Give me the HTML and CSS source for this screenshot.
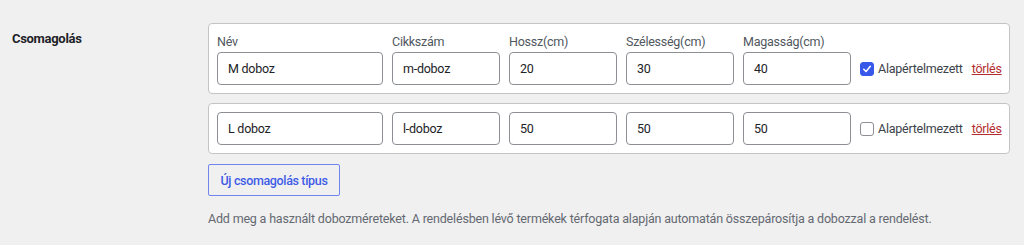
FILE: index.html
```html
<!DOCTYPE html>
<html lang="hu">
<head>
<meta charset="utf-8">
<title>Csomagolás</title>
<link rel="stylesheet" href="styles.css">
</head>
<body>
<div class="form-row">
  <div class="row-label">Csomagolás</div>
  <div class="row-field">
    <div class="pack">
      <div class="cell cell-name">
        <label class="cell-label">Név</label>
        <input class="inp" type="text" value="M doboz">
      </div>
      <div class="cell">
        <label class="cell-label">Cikkszám</label>
        <input class="inp" type="text" value="m-doboz">
      </div>
      <div class="cell">
        <label class="cell-label">Hossz(cm)</label>
        <input class="inp" type="text" value="20">
      </div>
      <div class="cell">
        <label class="cell-label">Szélesség(cm)</label>
        <input class="inp" type="text" value="30">
      </div>
      <div class="cell">
        <label class="cell-label">Magasság(cm)</label>
        <input class="inp" type="text" value="40">
      </div>
      <div class="extra">
        <span class="check check-on"><svg viewBox="0 0 14 14" width="14" height="14"><path d="M3.2 7.3 L5.9 10 L10.9 3.8" fill="none" stroke="#fff" stroke-width="1.8" stroke-linecap="round" stroke-linejoin="round"/></svg></span>
        <span class="check-text">Alapértelmezett</span>
        <a class="del" href="#">törlés</a>
      </div>
    </div>
    <div class="pack">
      <div class="cell cell-name"><input class="inp" type="text" value="L doboz"></div>
      <div class="cell"><input class="inp" type="text" value="l-doboz"></div>
      <div class="cell"><input class="inp" type="text" value="50"></div>
      <div class="cell"><input class="inp" type="text" value="50"></div>
      <div class="cell"><input class="inp" type="text" value="50"></div>
      <div class="extra">
        <span class="check"></span>
        <span class="check-text">Alapértelmezett</span>
        <a class="del" href="#">törlés</a>
      </div>
    </div>
    <button class="btn" type="button">Új csomagolás típus</button>
    <p class="desc">Add meg a használt dobozméreteket. A rendelésben lévő termékek térfogata alapján automatán összepárosítja a dobozzal a rendelést.</p>
  </div>
</div>
</body>
</html>
```
FILE: styles.css
```css
* { box-sizing: border-box; }
html, body { margin: 0; padding: 0; }
body {
  background: #f0f0f1;
  font-family: "Roboto", "Noto Sans", sans-serif;
  font-size: 12.5px;
  letter-spacing: -0.25px;
  color: #1d2327;
  width: 1024px;
  height: 245px;
  overflow: hidden;
}
.form-row {
  display: flex;
  padding: 23px 0 0 12px;
}
.row-label {
  width: 196px;
  flex: none;
  font-size: 13px;
  font-weight: 700;
  letter-spacing: -0.3px;
  line-height: 20px;
  padding-top: 6px;
  color: #1d2327;
}
.row-field {
  width: 802px;
  flex: none;
  display: flex;
  flex-direction: column;
  align-items: flex-start;
}
.pack {
  width: 802px;
  display: flex;
  align-items: flex-end;
  gap: 9px;
  background: #fff;
  border: 1px solid #c3c4c7;
  border-radius: 4px;
  padding: 8px;
  margin-bottom: 9px;
}
.cell {
  flex: none;
  display: flex;
  flex-direction: column;
  width: 108px;
}
.cell-name { width: 166px; }
.cell-label {
  line-height: 19px;
  color: #50575e;
  margin-bottom: 1px;
}
.inp {
  width: 100%;
  height: 33px;
  border: 1px solid #8c8f94;
  border-radius: 4px;
  padding: 0 10px;
  font: inherit;
  letter-spacing: inherit;
  color: #1d2327;
  background: #fff;
  margin: 0;
}
.extra {
  flex: none;
  height: 33px;
  display: flex;
  align-items: center;
  color: #3c434a;
}
.check {
  width: 14px;
  height: 14px;
  border: 1px solid #8c8f94;
  border-radius: 3px;
  background: #fff;
  display: flex;
  align-items: center;
  justify-content: center;
  margin-right: 4px;
}
.check-on {
  background: #3858e9;
  border-color: #3858e9;
}
.check-on svg { display: block; }
.check-text { margin-right: 9px; }
.del {
  color: #b32d2e;
  text-decoration: underline;
}
.btn {
  margin-top: 1px;
  width: 132px;
  height: 32px;
  border: 1px solid #6f84ee;
  border-radius: 2px;
  background: transparent;
  color: #3f5ce6;
  font: inherit;
  font-size: 12.5px;
  font-weight: 500;
  letter-spacing: -0.35px;
  padding: 0;
}
.desc {
  margin: 13px 0 0;
  color: #646970;
  line-height: 19px;
  letter-spacing: -0.18px;
}
```
